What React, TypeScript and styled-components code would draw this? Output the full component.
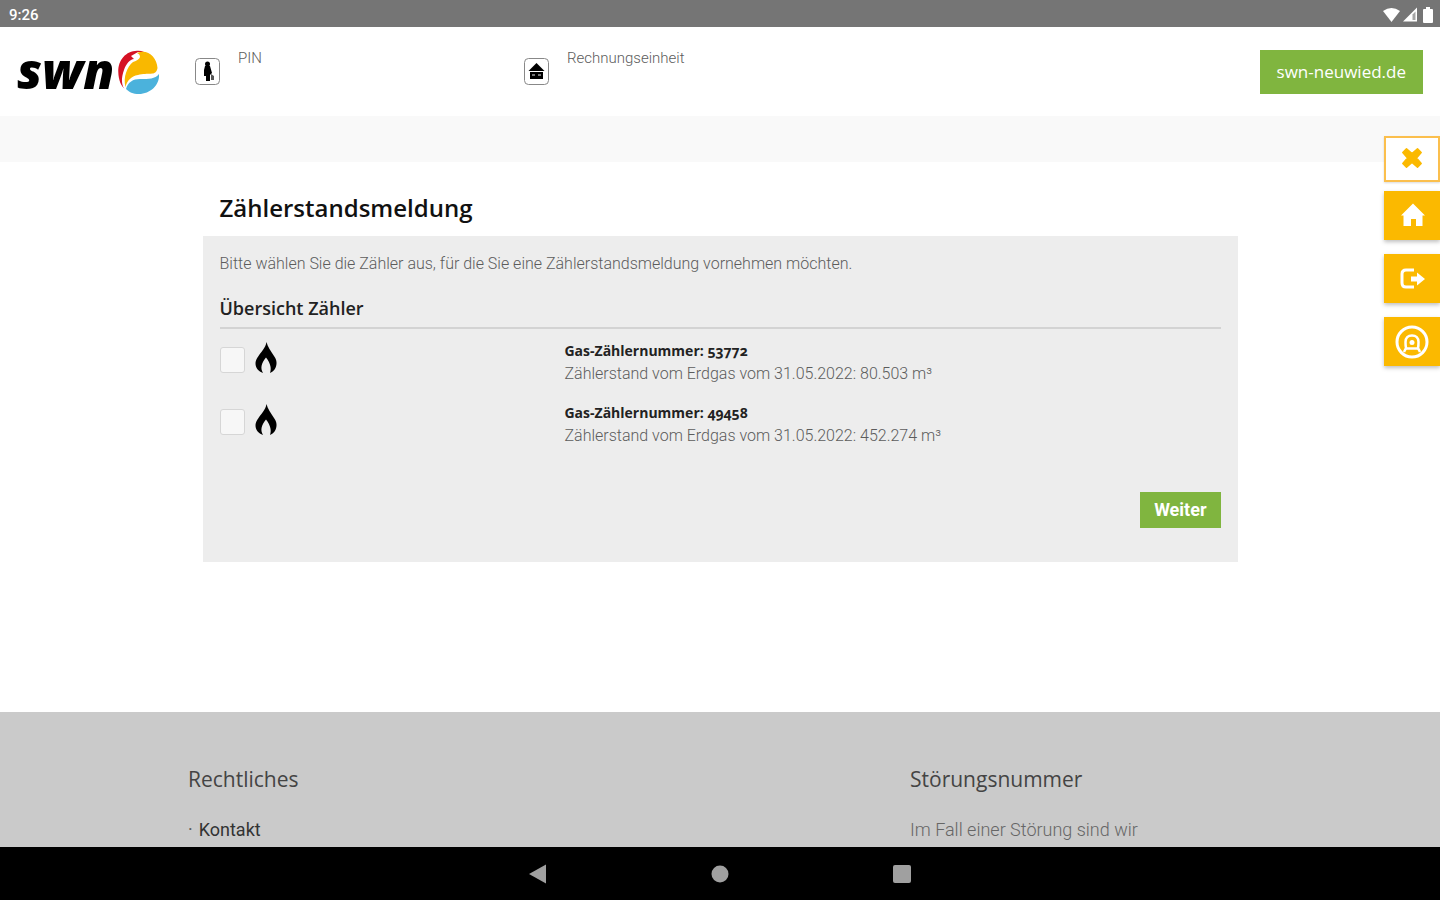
import React from 'react';
import styled, { createGlobalStyle, css } from 'styled-components';

const heading = "'Open Sans', 'Noto Sans', sans-serif";
const body = "Roboto, 'Noto Sans', sans-serif";
const green = '#80b53f';
const amber = '#fbb900';

const GlobalStyle = createGlobalStyle`
  *, *::before, *::after { box-sizing: border-box; }
  body { margin: 0; background: #fff; font-family: ${body}; color: #5c5c5c; }
  h1, h2, h3, p, ul { margin: 0; padding: 0; }
  svg { display: block; }
`;

const Screen = styled.div`
  position: relative;
  display: flex;
  flex-direction: column;
  min-height: 100vh;
`;

const StatusBar = styled.div`
  display: flex;
  align-items: center;
  justify-content: space-between;
  height: 27px;
  padding: 2px 7px 0 9px;
  background: #757575;
  color: #fff;
  font-size: 15px;
  font-weight: 500;
`;

const StatusIcons = styled.div`
  display: flex;
  align-items: center;
  gap: 3px;
`;

const Header = styled.header`
  display: flex;
  height: 89px;
  padding: 0 17px;
`;

const Logo = styled.a`
  display: flex;
  align-items: center;
  gap: 4px;
  flex: 0 0 178px;
  color: #000;
  text-decoration: none;
`;

const LogoWord = styled.span`
  font: italic 800 50px/52px ${heading};
  height: 56px;
`;

const Info = styled.div`
  display: flex;
  gap: 18px;
  flex: 0 1 329px;
  padding-top: 21px;
  font-size: 15px;
  line-height: 20px;
  font-weight: 300;
`;

const InfoIcon = styled.span`
  padding-top: 10px;
`;

const SiteLink = styled.a`
  align-self: center;
  margin-left: auto;
  padding: 0 17px;
  background: ${green};
  color: #fff;
  font: 400 17px/44px ${heading};
  text-decoration: none;
`;

const Band = styled.div`
  height: 46px;
  background: #f9f9f9;
`;

const Main = styled.main`
  flex: 1;
  width: 100%;
  max-width: 1035px;
  margin: 0 auto;
  padding: 30px 0 72px;
`;

const Title = styled.h1`
  padding: 0 17px 12px;
  color: #111;
  font: 600 24px/32px ${heading};
`;

const Panel = styled.form`
  padding-bottom: 34px;
  background: #ededed;
`;

const Intro = styled.p`
  padding: 16px 17px;
  font-size: 16px;
  font-weight: 300;
  line-height: 24px;
`;

const SectionTitle = styled.h2`
  margin: 0 17px;
  padding-bottom: 3px;
  border-bottom: 2px solid #d3d3d3;
  color: #222;
  font: 600 18px/32px ${heading};
`;

const MeterTable = styled.table`
  width: 100%;
  margin-top: 11px;
  border-collapse: collapse;
  table-layout: fixed;
`;

const Cell = styled.td<{ $share: string }>`
  width: ${(p) => p.$share};
  height: 62px;
  padding: 0 17px;
  vertical-align: top;
`;

const Choice = styled.label`
  display: flex;
  align-items: flex-start;
  gap: 10px;
  padding-top: 2px;
`;

const Check = styled.input`
  appearance: none;
  width: 25px;
  height: 26px;
  margin: 5px 0 0;
  border: 1px solid #d6d6d6;
  border-radius: 3px;
  background: #f7f7f7;
  &:checked { background: ${green}; }
`;

const MeterName = styled.div`
  color: #222;
  font: 700 14px/22px ${heading};
  font-variant-numeric: oldstyle-nums;
`;

const MeterValue = styled.div`
  font-size: 16px;
  font-weight: 300;
  line-height: 24px;
`;

const Actions = styled.div`
  display: flex;
  justify-content: flex-end;
  padding: 28px 17px 0;
`;

const Submit = styled.button`
  padding: 0 14px;
  border: 0;
  background: ${green};
  color: #fff;
  font: 700 18px/36px ${body};
`;

const Footer = styled.footer`
  height: 135px;
  overflow: hidden;
  background: #cacaca;
`;

const FooterGrid = styled.div`
  display: grid;
  grid-template-columns: 722px 1fr;
  max-width: 1064px;
  margin: 0 auto;
  padding-top: 51px;
`;

const FooterTitle = styled.h3`
  padding-bottom: 20px;
  color: #444;
  font: 400 21px/32px ${heading};
`;

const FooterList = styled.ul`
  list-style: none;
  font-size: 18px;
  line-height: 30px;
`;

const FooterItem = styled.li`
  display: flex;
  gap: 6px;
`;

const FooterLink = styled.a`
  color: #333;
  text-decoration: none;
`;

const FooterText = styled.p`
  color: #666;
  font-size: 18px;
  font-weight: 300;
  line-height: 30px;
`;

const NavBar = styled.nav`
  display: flex;
  align-items: center;
  justify-content: center;
  gap: 158px;
  height: 53px;
  background: #000;
`;

const NavButton = styled.button`
  padding: 0 2px;
  border: 0;
  background: none;
`;

const SideMenu = styled.div`
  position: absolute;
  top: 136px;
  right: 0;
  display: flex;
  flex-direction: column;
  gap: 14px;
`;

const SideButton = styled.button<{ $outlined?: boolean }>`
  display: flex;
  align-items: center;
  justify-content: center;
  width: 56px;
  height: 49px;
  padding: 0;
  border: 0;
  background: ${amber};
  box-shadow: 0 2px 4px rgba(0, 0, 0, 0.25);
  ${(p) =>
    p.$outlined &&
    css`
      height: 46px;
      margin-bottom: -5px;
      padding-bottom: 2px;
      border: 2px solid #fbbf4d;
      background: #fff;
      box-shadow: 0 1px 2px rgba(0, 0, 0, 0.15);
    `}
`;

const Flame = () => (
  <svg width="22" height="32" viewBox="0 0 22 32" aria-hidden="true">
    <path
      d="M11.500 0C12.500 5 16 9 19 14C21 17 21.800 19 21.500 22C21 26 19 29.500 15 31C16.500 27 16 22 11 15.500C6.500 21 5 26 8 31C3.500 29.500 .8 26 .5 22C.3 19 1.500 17 3.500 14C6 10 10.500 6 11.500 0Z"
      fill="#000"
    />
  </svg>
);

const meters = [
  { id: '53772', value: '80.503' },
  { id: '49458', value: '452.274' },
];

export default function App() {
  return (
    <>
      <GlobalStyle />
      <Screen>
        <StatusBar>
          <span>9:26</span>
          <StatusIcons>
            <svg width="17" height="14" viewBox="0 0 17 14"><path d="M0 3Q8.500-3 17 3L8.500 14Z" fill="#fff" /></svg>
            <svg width="14" height="15" viewBox="0 0 14 15">
              <path d="M14 .5V14.500H0Z" fill="#fff" />
              <path d="M9.500 7.500L12.500 4.500V13H9.500Z" fill="#a5a5a5" />
            </svg>
            <svg width="13" height="16" viewBox="0 0 13 16"><path d="M4 2H6V0H10V2H12Q13 2 13 3V15Q13 16 12 16H4Q3 16 3 15V3Q3 2 4 2Z" fill="#fff" /></svg>
          </StatusIcons>
        </StatusBar>

        <Header>
          <Logo href="#start" aria-label="swn">
            <LogoWord>swn</LogoWord>
            <svg width="42" height="44" viewBox="0 0 42 44">
              <path d="M19 .8C8 1 0 10 .3 22C.5 30 3 36 7 39C4 27 8 15 18 9L26 2Q23 .5 19 .8Z" fill="#d51224" />
              <path d="M13 6L20 2C33 1 40 9 40 19L41 25L8 41C3 36 3 28 6 20C8 14 12 9 16 9Z" fill="#fff" />
              <path d="M22 2C31 0 39 8 39.500 18C38 27 30 22 20 25C13 26 9 31 7.500 37C5 27 9 17 15 12Q21 10 22 7Q22 4 19 3Z" fill="#f9b800" />
              <path d="M41 24C42 35 32 44 21 44C15 44 11 42 8 39C10 32 15 29 22 29C31 29 37 29 41 24Z" fill="#4bb2dc" />
            </svg>
          </Logo>
          <Info>
            <InfoIcon>
              <svg width="25" height="27" viewBox="0 0 25 27">
                <rect x=".5" y=".5" width="24" height="26" rx="4" fill="#fff" stroke="#888" />
                <circle cx="12.500" cy="6" r="2.500" />
                <path d="M10 8H15L17 15L15 17V23H11V18H9V12Z" />
                <path d="M16 16L19 18V22H16Z" fill="#555" />
              </svg>
            </InfoIcon>
            <span>PIN</span>
          </Info>
          <Info>
            <InfoIcon>
              <svg width="25" height="27" viewBox="0 0 25 27">
                <rect x=".5" y=".5" width="24" height="26" rx="4" fill="#fff" stroke="#888" />
                <path d="M12.500 5L20.500 13H4.500Z M6 14H19V21H6Z" />
                <path d="M8 16H11V18H8Z M14 16H17V18H14Z" fill="#777" />
              </svg>
            </InfoIcon>
            <span>Rechnungseinheit</span>
          </Info>
          <SiteLink href="#swn-neuwied">swn-neuwied.de</SiteLink>
        </Header>
        <Band />

        <Main>
          <Title>Zählerstandsmeldung</Title>
          <Panel onSubmit={(e) => e.preventDefault()}>
            <Intro>Bitte wählen Sie die Zähler aus, für die Sie eine Zählerstandsmeldung vornehmen möchten.</Intro>
            <SectionTitle>Übersicht Zähler</SectionTitle>
            <MeterTable>
              <tbody>
                {meters.map((m) => (
                  <tr key={m.id}>
                    <Cell $share="33.333%">
                      <Choice>
                        <Check type="checkbox" name="meter" value={m.id} aria-label={`Gas-Zählernummer: ${m.id}`} />
                        <Flame />
                      </Choice>
                    </Cell>
                    <Cell $share="66.667%">
                      <MeterName>Gas-Zählernummer: {m.id}</MeterName>
                      <MeterValue>Zählerstand vom Erdgas vom 31.05.2022: {m.value} m³</MeterValue>
                    </Cell>
                  </tr>
                ))}
              </tbody>
            </MeterTable>
            <Actions>
              <Submit type="submit">Weiter</Submit>
            </Actions>
          </Panel>
        </Main>

        <Footer>
          <FooterGrid>
            <section>
              <FooterTitle>Rechtliches</FooterTitle>
              <FooterList>
                <FooterItem>
                  <span>·</span>
                  <FooterLink href="#kontakt">Kontakt</FooterLink>
                </FooterItem>
              </FooterList>
            </section>
            <section>
              <FooterTitle>Störungsnummer</FooterTitle>
              <FooterText>Im Fall einer Störung sind wir</FooterText>
            </section>
          </FooterGrid>
        </Footer>

        <NavBar>
          <NavButton type="button" aria-label="Zurück">
            <svg width="20" height="20" viewBox="0 0 20 20"><path d="M1 10L18 .5V19.500Z" fill="#a0a0a0" /></svg>
          </NavButton>
          <NavButton type="button" aria-label="Startbildschirm">
            <svg width="20" height="20" viewBox="0 0 20 20"><circle cx="10" cy="10" r="8.500" fill="#a0a0a0" /></svg>
          </NavButton>
          <NavButton type="button" aria-label="Übersicht">
            <svg width="20" height="20" viewBox="0 0 20 20"><rect x="1" y="1" width="18" height="18" rx="2" fill="#a0a0a0" /></svg>
          </NavButton>
        </NavBar>

        <SideMenu>
          <SideButton type="button" aria-label="Schließen" $outlined>
            <svg width="22" height="22" viewBox="0 0 22 22">
              <path d="M5.500 1.800L11 6.500L16.500 1.800L20.200 5.500L15.500 11L20.200 16.500L16.500 20.200L11 15.500L5.500 20.200L1.800 16.500L6.500 11L1.800 5.500Z" fill={amber} stroke={amber} strokeWidth="1.500" strokeLinejoin="round" />
            </svg>
          </SideButton>
          <SideButton type="button" aria-label="Startseite">
            <svg width="26" height="26" viewBox="0 0 26 26">
              <path d="M14 .5L26 12.500H23.500V23H17V16H12V23H4.500V12.500H2Z" fill="#fff" />
            </svg>
          </SideButton>
          <SideButton type="button" aria-label="Abmelden">
            <svg width="26" height="24" viewBox="0 0 26 24">
              <path d="M15 3H7Q3 3 3 7V16Q3 20 7 20H15" fill="none" stroke="#fff" strokeWidth="3" />
              <path d="M12 9.500H18V5.500L26 12L18 18.500V14.500H12Z" fill="#fff" />
            </svg>
          </SideButton>
          <SideButton type="button" aria-label="Benutzerkonto">
            <svg width="34" height="34" viewBox="0 0 34 34" fill="none" stroke="#fff" strokeWidth="3">
              <circle cx="17" cy="17" r="15" />
              <path d="M9 27L11 23Q10.500 21 10.500 17C10.500 13 13 10.500 17 10.500S23.500 13 23.500 17Q23.500 21 23 23L25 27" strokeWidth="2.500" />
              <circle cx="17" cy="17.500" r="2.500" fill="#fff" stroke="none" />
              <path d="M11 23.500H23" strokeWidth="2.500" />
            </svg>
          </SideButton>
        </SideMenu>
      </Screen>
    </>
  );
}
